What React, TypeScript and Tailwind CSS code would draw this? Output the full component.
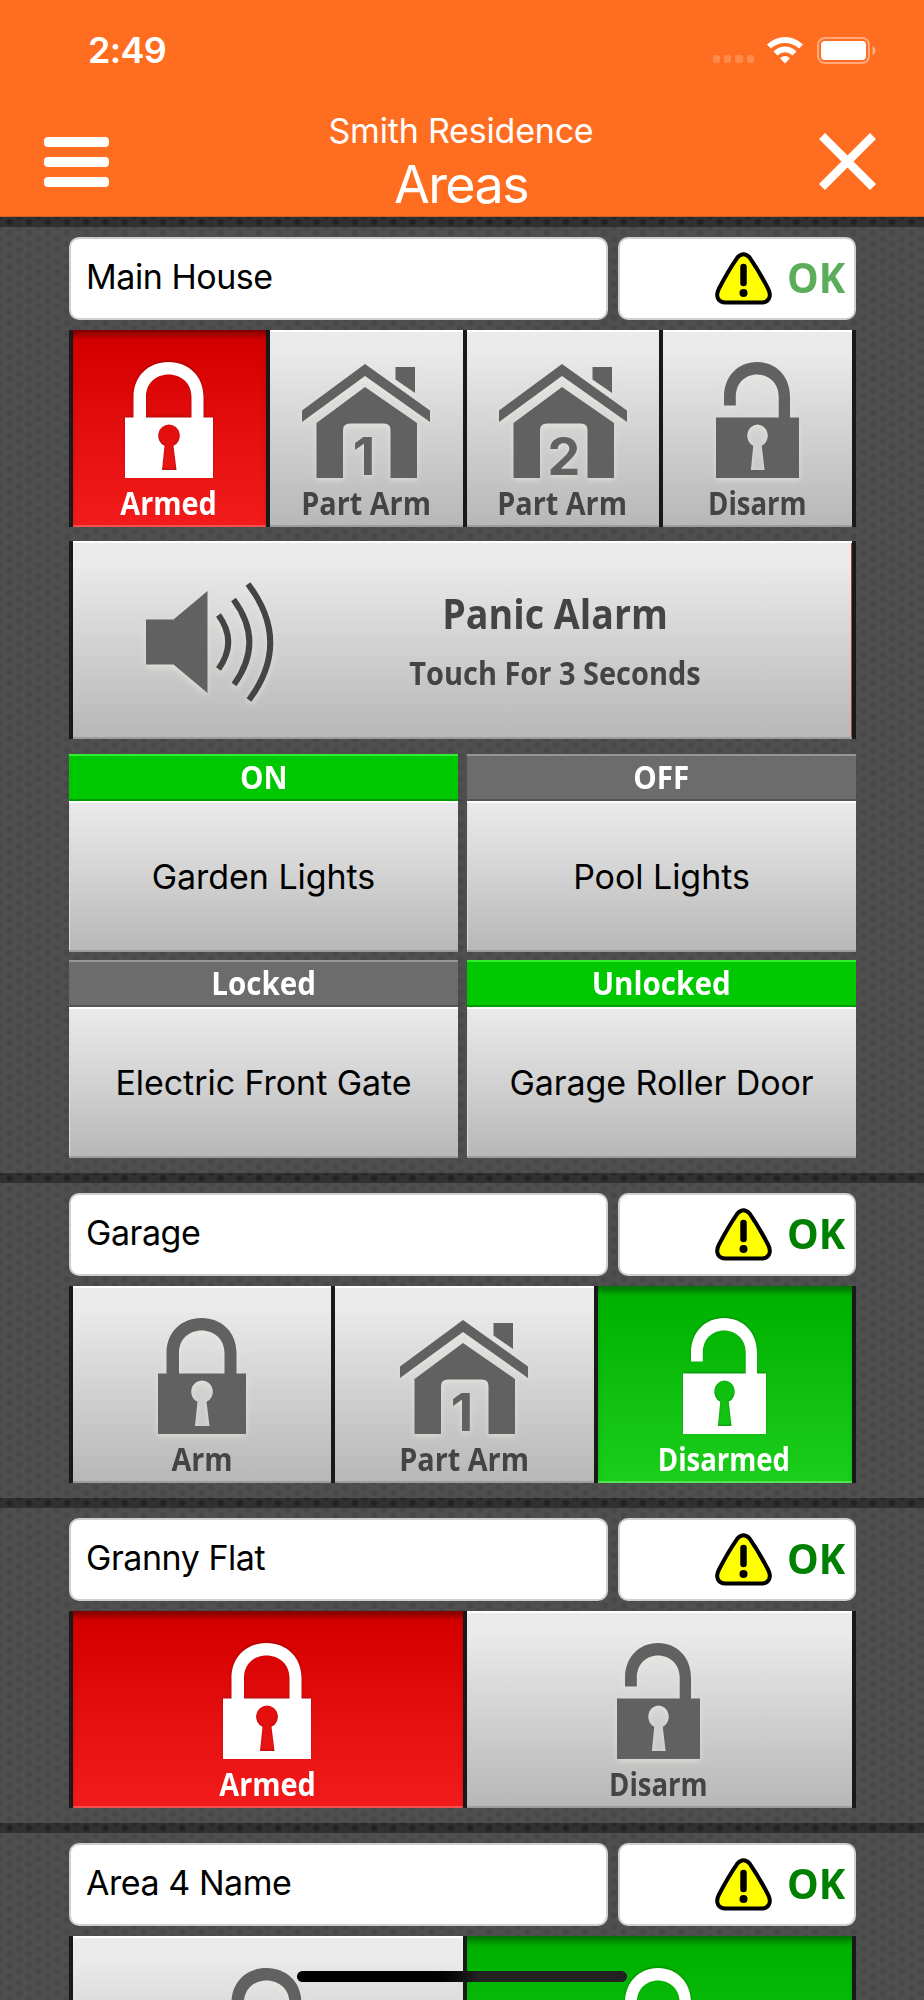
import clsx from "clsx";

type Kind = "locked" | "unlocked" | "home1" | "home2";

type Mode = {
  label: string;
  kind: Kind;
  active?: "red" | "green";
};

function Lock({ open = false }: { open?: boolean }) {
  return (
    <svg
      viewBox="0 0 88 116"
      preserveAspectRatio="none"
      className={clsx("mr-[1px] h-[116px]", open ? "w-[83px]" : "w-[88px]")}
      fill="currentColor"
    >
      <path
        fillRule="evenodd"
        d="M0 55.5H88V116H0ZM44 62.5A11.2 11.2 0 0 0 39.5 83.8L37 108H51.5L48.5 83.8A11.2 11.2 0 0 0 44 62.5Z"
      />
      {open ? (
        <path d="M8.5 43.5V35C8.5 14 23.5 0 43.5 0S78.5 14 78.5 35V56H66.5V35C66.5 21 56 12.5 43.5 12.5S21 21 21 35V43.5Z" />
      ) : (
        <path d="M8.5 56V35C8.5 14 23.5 0 43.5 0S78.5 14 78.5 35V56H66.5V35C66.5 21 56 12.5 43.5 12.5S21 21 21 35V56Z" />
      )}
    </svg>
  );
}

function House({ num }: { num: string }) {
  return (
    <svg
      viewBox="0 0 128 114"
      className="h-[114px] w-[128px] overflow-visible"
      fill="currentColor"
    >
      <path d="M63 0L128 46.5V58L63 12L0 58V46.5Z" />
      <path d="M93.5 3H113V29L93.5 15.5Z" />
      <path d="M63 23L115 59V114H88.5V66Q88.5 59.5 82 59.5H48Q41 59.5 41 66V114H14.5V59Z" />
      <text
        x={num === "1" ? 62 : 65}
        y="111"
        textAnchor="middle"
        className="font-['Inter'] text-[52px] font-bold"
      >
        {num}
      </text>
    </svg>
  );
}

function ModeIcon({ kind }: { kind: Kind }) {
  if (kind === "home1") return <House num="1" />;
  if (kind === "home2") return <House num="2" />;
  return <Lock open={kind === "unlocked"} />;
}

function Warning() {
  return (
    <svg viewBox="0 0 57 53" className="h-[53px] w-[57px]">
      <path
        d="M22.5 5.3Q28.5 -1 34.5 5.3Q44 19 53 36.5C57.5 45 53 50.5 46.5 50.5H10.5C4 50.5 -.5 45 4 36.5Q13 19 22.5 5.3Z"
        fill="#ff0"
        stroke="#000"
        strokeWidth="4"
      />
      <path d="M28.5 15V31" stroke="#000" strokeWidth="6.5" strokeLinecap="round" />
      <circle cx="28.5" cy="41" r="4" />
    </svg>
  );
}

function Strip() {
  return (
    <div className="h-[10px] bg-[#313131] bg-[radial-gradient(circle_at_9.6px_5px,#232323_2.5px,transparent_4px),radial-gradient(circle_at_0px_0px,#272727_2px,transparent_3.5px),radial-gradient(circle_at_19.2px_0px,#272727_2px,transparent_3.5px)] bg-size-[19.2px_11.25px]" />
  );
}

function AreaTitle({ name, fading }: { name: string; fading?: boolean }) {
  return (
    <div className="flex h-[83px] gap-[10px]">
      <div className="flex w-[539px] items-center rounded-[10px] border-2 border-[#cfcfcf] bg-white pb-[3px] pl-[15px]">
        <span className="text-[34px] leading-none tracking-[-0.45px]">{name}</span>
      </div>
      <div className="flex flex-1 items-center justify-end rounded-[10px] border-2 border-[#cfcfcf] bg-white pr-[7px]">
        <Warning />
        <span
          className={clsx(
            "mb-[4px] ml-[15px] inline-block w-[60px] origin-left scale-x-[0.95] font-['Open_Sans'] text-[42px] leading-none font-bold",
            fading ? "text-[#5bad5b]" : "text-[#008000]"
          )}
        >
          OK
        </span>
      </div>
    </div>
  );
}

function ModeButton({ mode }: { mode: Mode }) {
  return (
    <div
      className={clsx(
        "flex min-w-0 flex-col items-center border-l-4 border-[#191919] last:border-r-4",
        mode.active === "red" &&
          "bg-linear-to-b from-[#d60000] from-10% to-[#f31b1b] text-white shadow-[inset_0_9px_7px_-4px_#7a0000,inset_0_-2px_0_#f85050]",
        mode.active === "green" &&
          "bg-linear-to-b from-[#00b200] from-10% to-[#1bce1b] text-white shadow-[inset_0_9px_7px_-4px_#006c00,inset_0_-2px_0_#50e850]",
        !mode.active &&
          "bg-linear-to-b from-[#ebebeb] from-10% via-[#d6d6d6] via-45% to-[#b7b7b7] text-[#616161] shadow-[inset_0_2px_0_#fff,inset_0_-2px_0_#9d9d9d]"
      )}
    >
      <div
        className={clsx(
          "flex h-[148px] items-end",
          mode.active
            ? "drop-shadow-[0_-1px_1px_rgba(0,0,0,0.25)]"
            : "drop-shadow-[0_2px_3px_rgba(235,232,222,0.7)]"
        )}
      >
        <ModeIcon kind={mode.kind} />
      </div>
      <span
        className={clsx(
          "mt-[8px] mr-[1px] font-['Open_Sans'] text-[32px] leading-[34px] font-bold whitespace-nowrap",
          mode.label.startsWith("Disarm") ? "scale-x-[0.86]" : "scale-x-[0.9]",
          !mode.active && "text-[#444]"
        )}
      >
        {mode.label}
      </span>
    </div>
  );
}

function ModeRow({ modes }: { modes: Mode[] }) {
  return (
    <div className="mt-[10px] grid h-[197px] auto-cols-fr grid-flow-col">
      {modes.map((mode, i) => (
        <ModeButton key={i} mode={mode} />
      ))}
    </div>
  );
}

function Area({ name, modes }: { name: string; modes: Mode[] }) {
  return (
    <section>
      <Strip />
      <div className="mr-[68px] ml-[69px] pt-[10px] pb-[15px]">
        <AreaTitle name={name} />
        <ModeRow modes={modes} />
      </div>
    </section>
  );
}

function PanicButton() {
  return (
    <div className="mt-[14px] flex h-[198px] border-x-4 border-[#191919] bg-linear-to-b from-[#ebebeb] from-10% via-[#d6d6d6] via-45% to-[#b7b7b7] text-[#444] shadow-[inset_0_2px_0_#fff,inset_0_-2px_0_#9d9d9d,inset_-1px_0_0_#b04040]">
      <svg
        viewBox="0 0 128 122"
        className="mt-[40px] ml-[73px] h-[122px] w-[128px] drop-shadow-[0_3px_3px_rgba(235,232,222,0.7)]"
        fill="none"
        stroke="currentColor"
        strokeWidth="6"
      >
        <path d="M0 38.5H27.5L61.5 10V112L27.5 83.5H0Z" fill="#616161" stroke="none" />
        <path d="M72.5 34Q92 61 72.5 88" />
        <path d="M87.5 18.5Q119 61 88 103.5" />
        <path d="M102 3Q146 61 103 119" />
      </svg>
      <div className="ml-[96px] flex w-[370px] flex-col items-center font-['Open_Sans'] font-bold whitespace-nowrap">
        <span className="mt-[48px] scale-x-[0.895] text-[42px] leading-[48px]">Panic Alarm</span>
        <span className="mt-[16px] scale-x-[0.905] text-[32px] leading-[40px]">
          Touch For 3 Seconds
        </span>
      </div>
    </div>
  );
}

type Output = { status: string; name: string; on: boolean };

function OutputTile({ status, name, on }: Output) {
  return (
    <div className="flex h-[198px] flex-1 flex-col">
      <div
        className={clsx(
          "flex h-[47px] items-center justify-center pb-[2px] font-['Open_Sans'] text-[32px] leading-none font-bold text-white",
          on
            ? "bg-[#00c800] shadow-[inset_0_2px_0_#30f030,inset_0_-2px_0_#009c00]"
            : "bg-[#6c6c6c] shadow-[inset_0_2px_0_#969696,inset_0_-2px_0_#545454]"
        )}
      >
        <span className="scale-x-[0.925]">{status}</span>
      </div>
      <div className="flex flex-1 items-center justify-center bg-linear-to-b from-[#ebebeb] via-[#d2d2d2] to-[#b7b7b7] pt-[1px] text-[34px] leading-none tracking-[-0.05px] text-black shadow-[inset_0_2px_0_#fff,inset_0_-2px_0_#9d9d9d,inset_1px_0_0_#ddd]">
        {name}
      </div>
    </div>
  );
}

const mainModes: Mode[] = [
  { label: "Armed", kind: "locked", active: "red" },
  { label: "Part Arm", kind: "home1" },
  { label: "Part Arm", kind: "home2" },
  { label: "Disarm", kind: "unlocked" },
];

const garageModes: Mode[] = [
  { label: "Arm", kind: "locked" },
  { label: "Part Arm", kind: "home1" },
  { label: "Disarmed", kind: "unlocked", active: "green" },
];

const flatModes: Mode[] = [
  { label: "Armed", kind: "locked", active: "red" },
  { label: "Disarm", kind: "unlocked" },
];

const area4Modes: Mode[] = [
  { label: "Arm", kind: "locked" },
  { label: "Disarmed", kind: "unlocked", active: "green" },
];

function StatusBar() {
  return (
    <div className="flex h-[100px] items-center justify-between pr-[48px] pl-[88px]">
      <span className="text-[36px] leading-none font-semibold tracking-[-0.7px]">2:49</span>
      <div className="flex items-center">
        <div className="mt-[18px] mr-[13px] flex gap-[4px]">
          {[0, 1, 2, 3].map((n) => (
            <i key={n} className="size-[7.3px] rounded-[2px] bg-white/20" />
          ))}
        </div>
        <svg viewBox="0 0 36 27" className="mr-[14px] h-[27px] w-[36px]" fill="#fff">
          <path d="M0 7.5Q8 0 18 0T36 7.5L32 11.5Q26 6 18 6T4 11.5Z" />
          <path d="M6.5 14.5Q11.5 9.5 18 9.5T29.5 14.5L25.5 18.5Q22 15.3 18 15.3T10.5 18.5Z" />
          <path d="M13 21.2Q15.5 19 18 19T23 21.2L18 26.5Z" />
        </svg>
        <svg viewBox="0 0 59 27" className="h-[27px] w-[59px]">
          <rect x="1" y="1" width="51" height="25" rx="7" fill="none" stroke="#fff" strokeOpacity=".42" strokeWidth="2" />
          <rect x="4" y="4" width="45" height="19" rx="4" fill="#fff" />
          <path d="M55.5 9Q58.5 10.5 58.5 13.5T55.5 18Z" fill="#fff" fillOpacity=".45" />
        </svg>
      </div>
    </div>
  );
}

export default function App() {
  return (
    <div className="relative h-[2000px] w-[924px] overflow-hidden bg-[#4f4f4f] bg-[radial-gradient(circle_at_9.6px_8px,#484848_2.5px,transparent_4px),radial-gradient(circle_at_0px_2.4px,#484848_2.5px,transparent_4px),radial-gradient(circle_at_19.2px_2.4px,#484848_2.5px,transparent_4px)] bg-size-[19.2px_11.25px] font-['Inter'] text-black">
      <header className="h-[217px] border-b border-[#c9632b] bg-[#ff6d20] text-white">
        <StatusBar />
        <div className="flex items-start justify-between pr-[48px] pl-[44px]">
          <button className="mt-[37px] flex flex-col gap-[10px]">
            <span className="block h-[10px] w-[65px] rounded-[4px] bg-white" />
            <span className="block h-[10px] w-[65px] rounded-[4px] bg-white" />
            <span className="block h-[10px] w-[65px] rounded-[4px] bg-white" />
          </button>
          <div className="mt-[10px] mr-[6px] flex flex-col items-center">
            <h2 className="text-[34px] leading-[42px] tracking-[-0.2px]">Smith Residence</h2>
            <h1 className="text-[52px] leading-[66px] tracking-[-1.6px]">Areas</h1>
          </div>
          <svg viewBox="0 0 57 57" className="mt-[33px] h-[57px] w-[57px]" stroke="#fff" strokeWidth="8.5">
            <path d="M3 3L54 54M54 3L3 54" />
          </svg>
        </div>
      </header>

      <section>
        <Strip />
        <div className="mr-[68px] ml-[69px] pt-[10px] pb-[15px]">
          <AreaTitle name="Main House" fading />
          <ModeRow modes={mainModes} />
          <PanicButton />
          <div className="mt-[15px] flex gap-[9px]">
            <OutputTile status="ON" name="Garden Lights" on />
            <OutputTile status="OFF" name="Pool Lights" on={false} />
          </div>
          <div className="mt-[8px] flex gap-[9px]">
            <OutputTile status="Locked" name="Electric Front Gate" on={false} />
            <OutputTile status="Unlocked" name="Garage Roller Door" on />
          </div>
        </div>
      </section>

      <Area name="Garage" modes={garageModes} />
      <Area name="Granny Flat" modes={flatModes} />
      <Area name="Area 4 Name" modes={area4Modes} />

      <div className="absolute top-[1971px] left-[297px] h-[11px] w-[330px] rounded-full bg-linear-to-r from-black from-38% to-[#222] to-55%" />
    </div>
  );
}
